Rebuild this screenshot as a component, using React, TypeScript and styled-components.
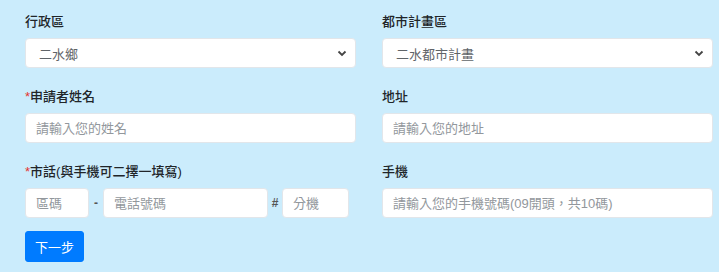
import styled, { createGlobalStyle } from "styled-components";

const GlobalStyle = createGlobalStyle`
  html, body {
    margin: 0;
    padding: 0;
    background: #cbecfc;
  }
  body {
    font-family: "Liberation Sans", "Noto Sans CJK TC", sans-serif;
    font-size: 13px;
    color: #212529;
  }
`;

const Page = styled.div`
  padding: 12px 6px 0 25px;
  width: 719px;
  box-sizing: border-box;
`;

const Grid = styled.div`
  display: grid;
  grid-template-columns: 331px 331px;
  column-gap: 26px;
  row-gap: 19px;
`;

const Field = styled.div`
  display: flex;
  flex-direction: column;
  gap: 7px;
`;

const Label = styled.label`
  font-size: 13px;
  line-height: 19px;
  font-weight: 500;
  color: #212529;
`;

const Required = styled.span`
  color: #e3342f;
`;

const SelectBox = styled.div`
  height: 30px;
  box-sizing: border-box;
  background: #fff;
  border: 1px solid #e2e6ea;
  border-radius: 4px;
  display: flex;
  align-items: center;
  justify-content: space-between;
  padding: 0 8px 0 13px;
  color: #5f6468;
  font-size: 13px;
`;

const Input = styled.input<{ $w?: number }>`
  height: 30px;
  box-sizing: border-box;
  width: ${(p) => (p.$w ? `${p.$w}px` : "100%")};
  background: #fff;
  border: 1px solid #e2e6ea;
  border-radius: 4px;
  padding: 0 10px;
  font-family: inherit;
  font-size: 13px;
  color: #495057;
  outline: none;

  &::placeholder {
    color: #92979c;
  }
`;

const PhoneRow = styled.div`
  display: flex;
  align-items: center;
`;

const Sep = styled.span`
  width: 14px;
  text-align: center;
  color: #555;
  font-size: 12px;
  font-weight: 600;
`;

const Button = styled.button`
  margin-top: 13px;
  width: 59px;
  height: 31px;
  background: #007bff;
  color: #fff;
  border: 1px solid #007bff;
  border-radius: 3px;
  font-family: inherit;
  font-size: 13px;
  padding: 0;
`;

const Chevron = () => (
  <svg width="10" height="7" viewBox="0 0 10 7">
    <path d="M1.5 1.5 L5 5 L8.5 1.5" fill="none" stroke="#444" strokeWidth="1.8" />
  </svg>
);

export default function App() {
  return (
    <Page>
      <GlobalStyle />
      <Grid>
        <Field>
          <Label>行政區</Label>
          <SelectBox>
            <span>二水鄉</span>
            <Chevron />
          </SelectBox>
        </Field>
        <Field>
          <Label>都市計畫區</Label>
          <SelectBox>
            <span>二水都市計畫</span>
            <Chevron />
          </SelectBox>
        </Field>
        <Field>
          <Label>
            <Required>*</Required>申請者姓名
          </Label>
          <Input placeholder="請輸入您的姓名" />
        </Field>
        <Field>
          <Label>地址</Label>
          <Input placeholder="請輸入您的地址" />
        </Field>
        <Field>
          <Label>
            <Required>*</Required>市話(與手機可二擇一填寫)
          </Label>
          <PhoneRow>
            <Input $w={64} placeholder="區碼" />
            <Sep>-</Sep>
            <Input $w={165} placeholder="電話號碼" />
            <Sep>#</Sep>
            <Input $w={67} placeholder="分機" />
          </PhoneRow>
        </Field>
        <Field>
          <Label>手機</Label>
          <Input placeholder="請輸入您的手機號碼(09開頭，共10碼)" />
        </Field>
      </Grid>
      <Button>下一步</Button>
    </Page>
  );
}
